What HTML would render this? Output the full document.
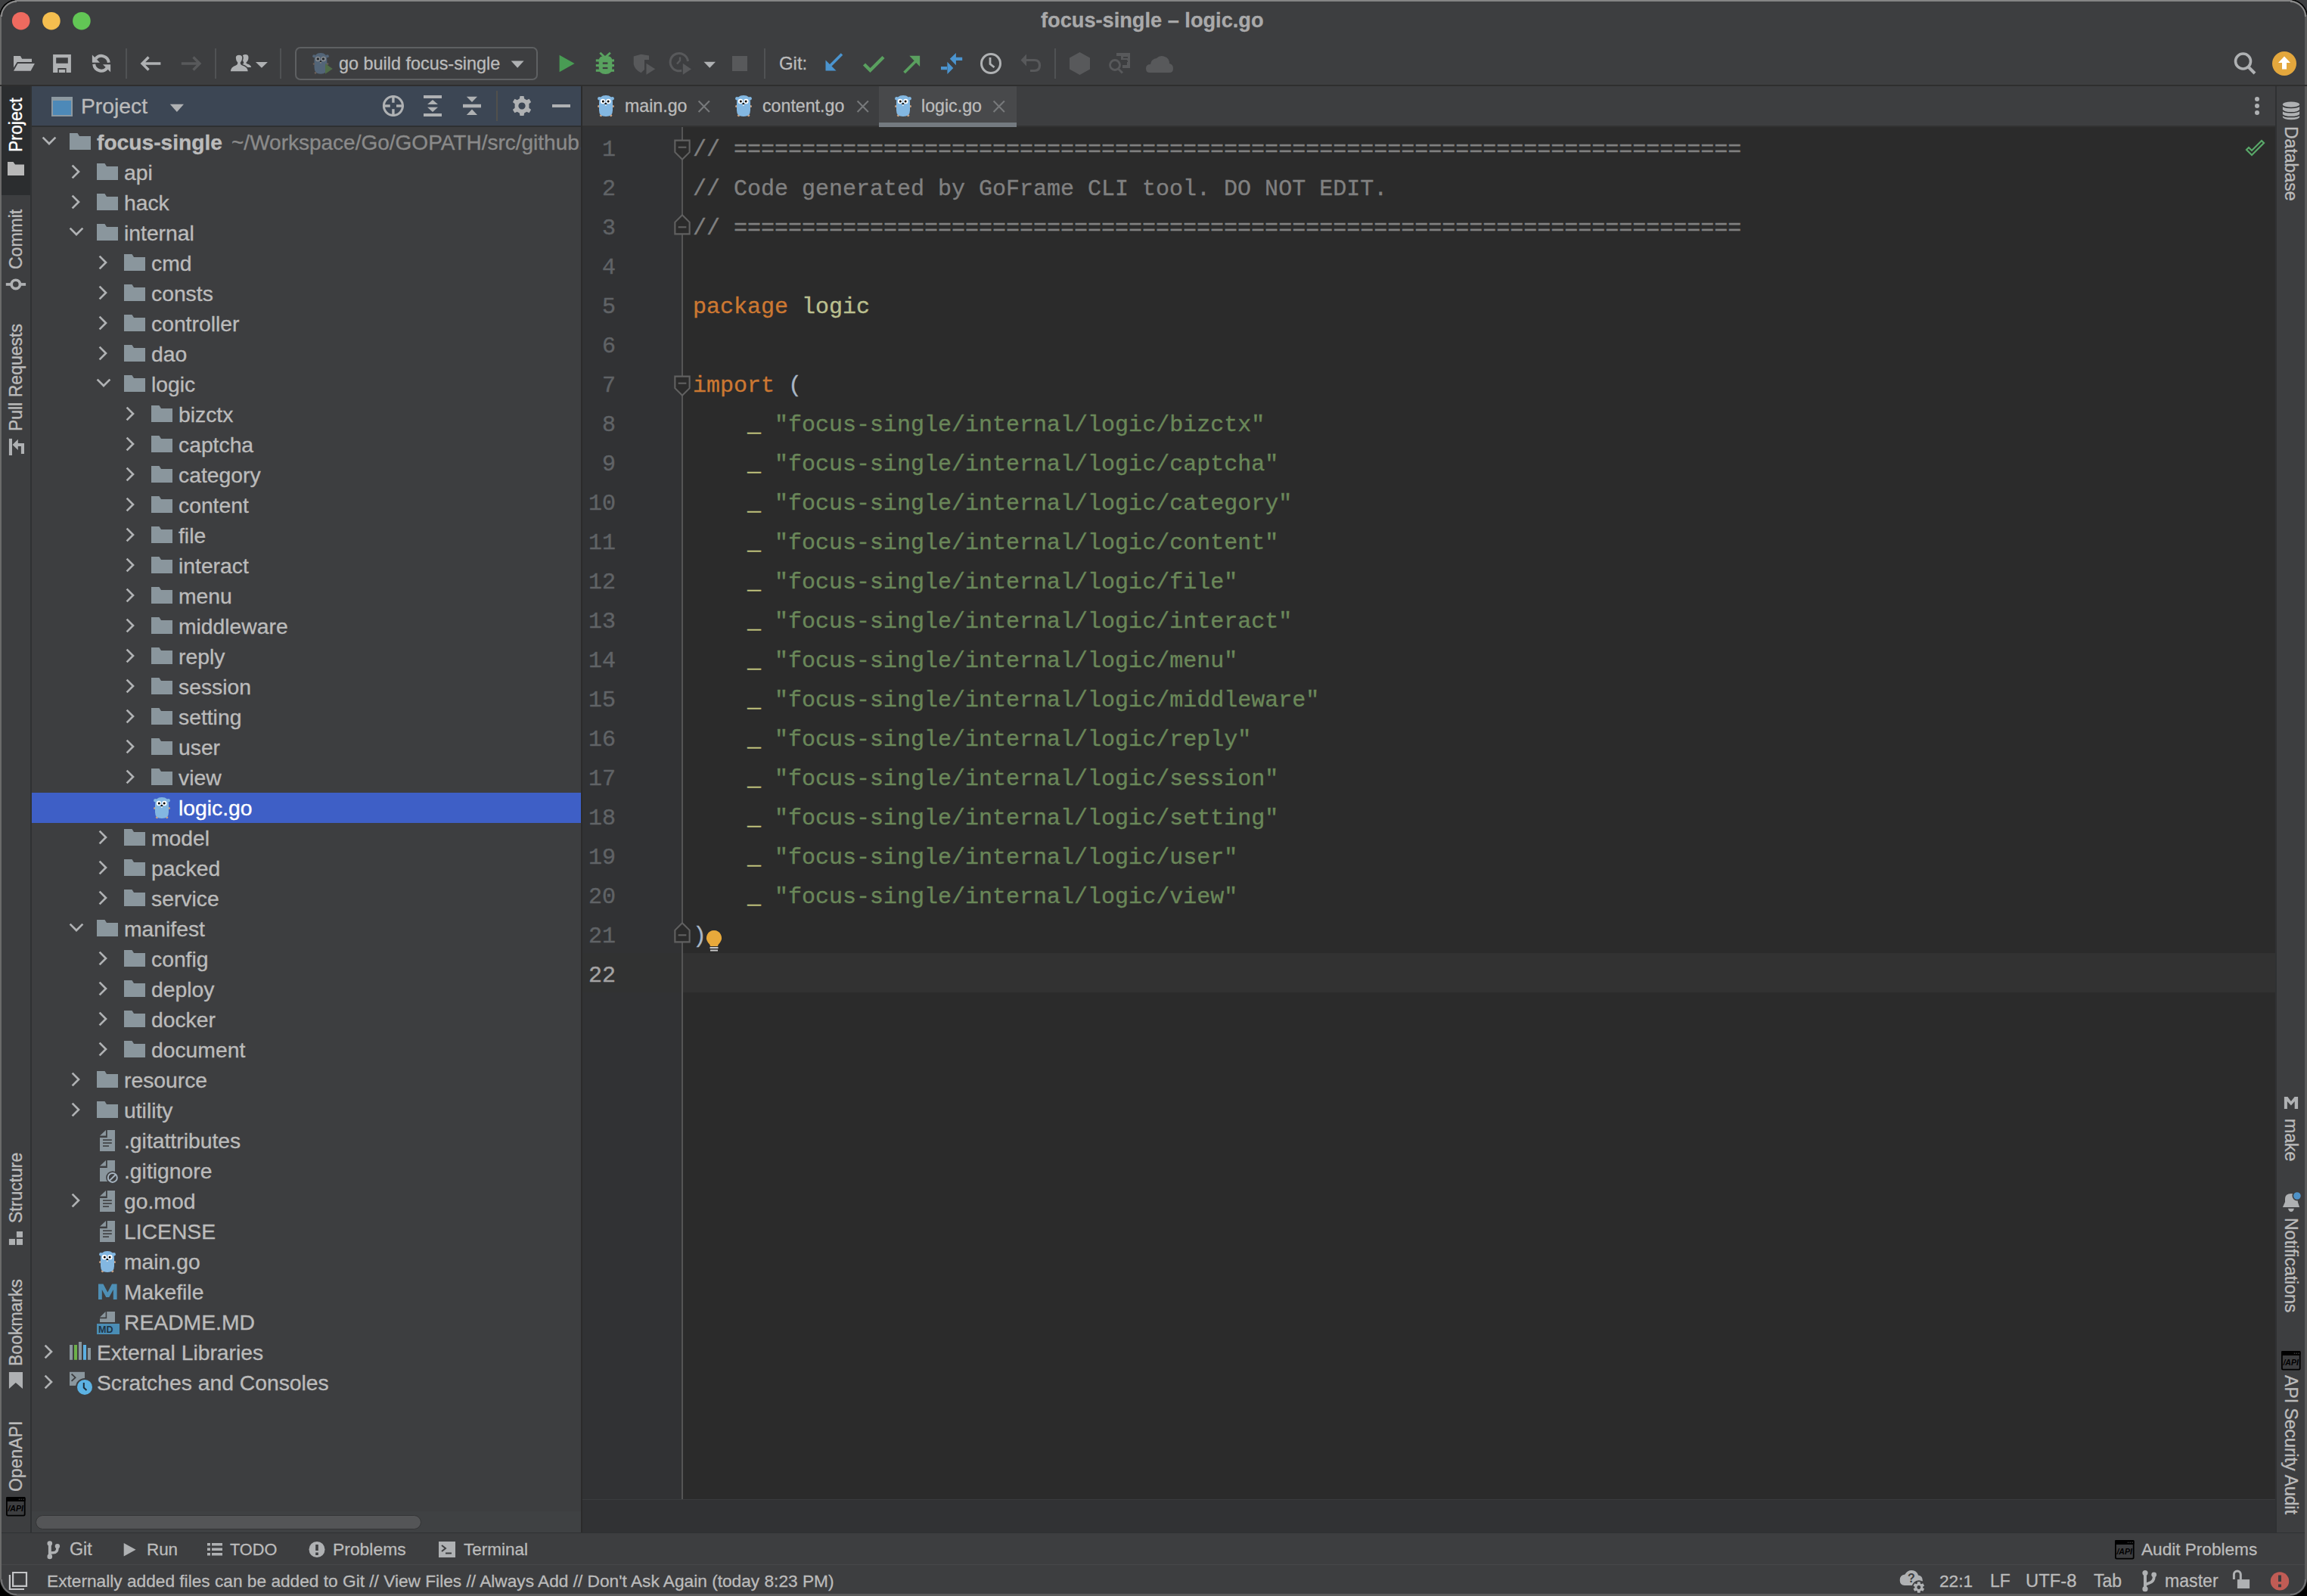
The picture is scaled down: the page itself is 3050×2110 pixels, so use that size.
<!DOCTYPE html><html><head><meta charset="utf-8"><style>
html,body{margin:0;padding:0;}
body{width:3050px;height:2110px;overflow:hidden;position:relative;background:#3d3e40;}
svg{overflow:visible}
</style></head><body>
<div style="position:absolute;left:0px;top:0px;width:3050px;height:2110px;background:#3d3e40;"></div>
<div style="position:absolute;left:0px;top:0px;width:3050px;height:2px;background:#858585;"></div>
<div style="position:absolute;left:0px;top:0px;width:2px;height:2110px;background:#6a6a6a;"></div>
<div style="position:absolute;left:3047px;top:0px;width:3px;height:2110px;background:#5a5a5a;"></div>
<div style="position:absolute;left:0px;top:2107px;width:3050px;height:3px;background:#5a5a5a;"></div>
<svg style="position:absolute;left:0;top:0" width="140" height="56"><circle cx="27.7" cy="27.7" r="11.8" fill="#ee6a5f"/><circle cx="67.9" cy="27.7" r="11.8" fill="#f5be4f"/><circle cx="107.9" cy="27.7" r="11.8" fill="#62c655"/></svg>
<div style="position:absolute;left:1376px;top:11.38px;font:bold 27.2px 'Liberation Sans', sans-serif;line-height:normal;color:#a9a9aa;white-space:pre;letter-spacing:0px;-webkit-text-stroke:0.3px #a9a9aa;">focus-single – logic.go</div>
<div style="position:absolute;left:0px;top:112px;width:3050px;height:2px;background:#2e2e2e;"></div>
<svg style="position:absolute;left:0px;top:56px" width="60" height="56" viewBox="0 56 60 56"><path d="M18 73.95 H27 L29.1 77.65 H42 V81.95 H22.7 L18 89.4 Z" fill="#afb1b3"/><path d="M23.5 84.1 H45.9 L40.6 93.85 H18 Z" fill="#afb1b3"/></svg>
<svg style="position:absolute;left:60px;top:56px" width="50" height="56" viewBox="60 56 50 56"><path d="M70.1 72 H93.9 V96 H87.6 V90.1 H76.3 V96 H70.1 Z M74.2 76.3 V83.7 H89.8 V76.3 Z" fill="#afb1b3" fill-rule="evenodd"/><rect x="77.9" y="91.9" width="8.2" height="4.1" fill="#afb1b3"/></svg>
<svg style="position:absolute;left:110px;top:56px" width="50" height="56" viewBox="110 56 50 56"><g fill="none" stroke="#afb1b3" stroke-width="4"><path d="M126.28 77.77 A9.8 9.8 0 0 1 143.8 82.8"/><path d="M124.2 84.8 A9.8 9.8 0 0 0 141.72 89.83"/></g><path d="M121.9 72.6 V82.7 H132 Z" fill="#afb1b3"/><path d="M136 85.2 H146.1 V95.2 Z" fill="#afb1b3"/></svg>
<div style="position:absolute;left:166px;top:64px;width:2px;height:40px;background:#505254;"></div>
<svg style="position:absolute;left:180px;top:56px" width="40" height="56" viewBox="180 56 40 56"><path d="M212.4 84 H188.5 M196.5 75.5 L188 84 L196.5 92.5" fill="none" stroke="#afb1b3" stroke-width="3.4"/></svg>
<svg style="position:absolute;left:235px;top:56px" width="40" height="56" viewBox="235 56 40 56"><path d="M239.8 84 H263.5 M255.5 75.5 L264 84 L255.5 92.5" fill="none" stroke="#58595b" stroke-width="3.4"/></svg>
<div style="position:absolute;left:284px;top:64px;width:2px;height:40px;background:#505254;"></div>
<svg style="position:absolute;left:300px;top:56px" width="60" height="56" viewBox="300 56 60 56"><path d="M319 89 Q319 85 322 84 Q322.5 83.5 322 82 Q320 79 320 76 Q320 72 324.5 72 Q328.5 72 328.5 76 Q328.5 80 325.5 82.5 Q325 83.8 327 84.5 Q332 86 332 89 Z" fill="#afb1b3"/><path d="M304 95 Q304 88 312 85.5 Q313.5 85 313.5 83 Q311 80 311 76.5 Q311 72 316 72 Q321 72 321 76.5 Q321 80 318.5 83 Q318.5 85 320 85.5 Q328.6 88 328.6 95 Z" fill="#afb1b3" stroke="#3d3e40" stroke-width="1.6"/><path d="M338 82 H353.9 L345.95 89.8 z" fill="#afb1b3"/></svg>
<div style="position:absolute;left:370px;top:64px;width:2px;height:40px;background:#505254;"></div>
<div style="position:absolute;left:390px;top:62px;width:317px;height:40px;border:2px solid #5e6062;border-radius:7px"></div>
<svg width="0" height="0" style="position:absolute"><defs>
<symbol id="gopher" viewBox="0 0 22 30">
<circle cx="2.4" cy="5.3" r="2.3" fill="#83b7e1"/><circle cx="19.6" cy="5.3" r="2.3" fill="#83b7e1"/>
<circle cx="1.5" cy="15.5" r="1.5" fill="#c8a081"/><circle cx="20.5" cy="15.5" r="1.5" fill="#c8a081"/>
<circle cx="4.5" cy="27.6" r="1.6" fill="#c8a081"/><circle cx="17.7" cy="27.6" r="1.6" fill="#c8a081"/>
<path d="M2 10 Q2 1 11 1 Q20 1 20 10 V21 Q20 29 11 29 Q2 29 2 21 Z" fill="#83b7e1"/>
<circle cx="7" cy="9" r="3.2" fill="#fff"/><circle cx="14.4" cy="9" r="3.2" fill="#fff"/>
<circle cx="7.3" cy="9" r="1.5" fill="#000"/><circle cx="14.1" cy="9" r="1.5" fill="#000"/>
<rect x="9.9" y="12.6" width="1.8" height="2" fill="#fff"/><ellipse cx="10.8" cy="12.2" rx="1.5" ry="1.1" fill="#111"/>
</symbol>
<symbol id="folder" viewBox="0 0 28 22">
<path d="M0 0 H10.5 L13 4 H28 V22 H0 Z" fill="#8a969d"/>
</symbol>
<symbol id="chevR" viewBox="0 0 12 20">
<path d="M1.6 1.6 L10 10 L1.6 18.4" fill="none" stroke="#b0b2b4" stroke-width="2.7"/>
</symbol>
<symbol id="chevD" viewBox="0 0 20 12">
<path d="M1.6 1.6 L10 10 L18.4 1.6" fill="none" stroke="#b0b2b4" stroke-width="2.7"/>
</symbol>
<symbol id="filei" viewBox="0 0 20 28">
<path d="M0 5.5 L5.5 0 V5.5 Z" fill="#8a969d"/><path d="M7 0 H20 V28 H0 V7 H7 Z" fill="#8a969d"/>
<rect x="3.5" y="13" width="13" height="2.2" fill="#3d3e40"/><rect x="3.5" y="17.5" width="10" height="2.2" fill="#3d3e40"/><rect x="3.5" y="22" width="7" height="2.2" fill="#3d3e40"/>
</symbol>
</defs></svg>
<svg style="position:absolute;left:405px;top:64px" width="45" height="40" viewBox="0 0 45 40"><g fill="#536578"><circle cx="10.2" cy="10.2" r="2"/><circle cx="27.8" cy="10.2" r="2"/><path d="M10.5 15 Q10.5 6 19 6 Q27.3 6 27.3 15 V25 Q27.3 33.7 19 33.7 Q10.5 33.7 10.5 25 Z"/></g><circle cx="10" cy="20.5" r="1.3" fill="#6a5e58"/><circle cx="28" cy="20.5" r="1.3" fill="#6a5e58"/><circle cx="12" cy="32.4" r="1.3" fill="#6a5e58"/><circle cx="15.2" cy="13.9" r="2.6" fill="none" stroke="#8b8c8d" stroke-width="1.3"/><circle cx="22.7" cy="13.9" r="2.6" fill="none" stroke="#8b8c8d" stroke-width="1.3"/><circle cx="15.4" cy="13.9" r="1.4" fill="#222"/><circle cx="22.3" cy="13.9" r="1.4" fill="#222"/><ellipse cx="19" cy="17.2" rx="1.2" ry="0.9" fill="#222"/><rect x="18.2" y="18" width="1.6" height="1.6" fill="#888"/><path d="M25 20 L34.8 27 L25 33.8 Z" fill="#4f6c48"/></svg>
<div style="position:absolute;left:448px;top:70.82px;font:normal 23.4px 'Liberation Sans', sans-serif;line-height:normal;color:#bbbbbb;white-space:pre;letter-spacing:0px;-webkit-text-stroke:0.3px #bbbbbb;">go build focus-single</div>
<svg style="position:absolute;left:670px;top:75px" width="30" height="20" viewBox="0 0 30 20"><path d="M5.7 5.4 H22.6 L14.15 14.8 Z" fill="#afb1b3"/></svg>
<svg style="position:absolute;left:735px;top:66px" width="30" height="36" viewBox="0 0 30 36"><path d="M4.6 6.8 L24.6 18 L4.6 29.2 Z" fill="#499c54"/></svg>
<svg style="position:absolute;left:782px;top:66px" width="36" height="36" viewBox="0 0 36 36"><g fill="#59a25f"><path d="M11.3 3.8 L17.9 10 L24.9 3.8" fill="none" stroke="#59a25f" stroke-width="2.8"/><path d="M9.7 14 Q9.7 7.7 18.5 7.7 Q27.3 7.7 27.3 14 V24 Q27.3 32 18.5 32 Q9.7 32 9.7 24 Z"/><rect x="5.8" y="12.4" width="24.2" height="3.1"/><rect x="5.8" y="19" width="24.2" height="3.1"/><rect x="5.8" y="25.6" width="24.2" height="3.2"/></g><rect x="14.8" y="16.4" width="6.6" height="2.4" fill="#3d3e40"/><rect x="14.8" y="22.9" width="6.6" height="2.2" fill="#3d3e40"/></svg>
<svg style="position:absolute;left:830px;top:66px" width="40" height="36" viewBox="0 0 40 36"><path d="M7.7 8.5 L17.5 5.7 L28 7.5 V13 H22 V26 L17.5 30.3 Q9 26 7.7 19 Z" fill="#58595b"/><path d="M23.7 16.3 L37.8 25.3 L23.7 34.2 Z" fill="#58595b" stroke="#3d3e40" stroke-width="1.6"/></svg>
<svg style="position:absolute;left:878px;top:66px" width="40" height="36" viewBox="0 0 40 36"><path d="M27.5 25 A11.7 11.7 0 1 1 31.5 15" fill="none" stroke="#58595b" stroke-width="3"/><path d="M21 9.5 V14 L17 18.5" fill="none" stroke="#58595b" stroke-width="2.4"/><path d="M24 16.3 L37.3 25.3 L24 34.2 Z" fill="#58595b" stroke="#3d3e40" stroke-width="1.6"/></svg>
<svg style="position:absolute;left:925px;top:75px" width="30" height="20" viewBox="0 0 30 20"><path d="M5.5 6.7 H21 L13.25 14.8 Z" fill="#afb1b3"/></svg>
<div style="position:absolute;left:968px;top:74px;width:20px;height:19.5px;background:#58595b;"></div>
<div style="position:absolute;left:1010px;top:64px;width:2px;height:40px;background:#505254;"></div>
<div style="position:absolute;left:1030px;top:70.37px;font:normal 23.9px 'Liberation Sans', sans-serif;line-height:normal;color:#bbbbbb;white-space:pre;letter-spacing:0px;-webkit-text-stroke:0.3px #bbbbbb;">Git:</div>
<svg style="position:absolute;left:1086px;top:66px" width="36" height="36" viewBox="0 0 36 36"><path d="M27 5.5 L9 23.5" stroke="#4b94cf" stroke-width="3.6" fill="none"/><path d="M5.5 13.5 V27.5 H19.5 Z" fill="#4b94cf"/></svg>
<svg style="position:absolute;left:1138px;top:66px" width="36" height="36" viewBox="0 0 36 36"><path d="M4.5 19 L12.5 27 L30 9.5" stroke="#5aa05f" stroke-width="4.4" fill="none"/></svg>
<svg style="position:absolute;left:1190px;top:66px" width="36" height="36" viewBox="0 0 36 36"><path d="M5.5 30 L22.5 13" stroke="#5aa05f" stroke-width="3.8" fill="none"/><path d="M12.3 7.8 H26.1 V21.9 Z" fill="#5aa05f"/></svg>
<svg style="position:absolute;left:1240px;top:62px" width="40" height="40" viewBox="0 0 40 40"><path d="M15.8 15.8 L23.9 7.9 V24.2 Z M23.5 13.75 H32.2 V18 H23.5 Z M12 25.9 H4 V30.2 H12 Z M20.3 28 L12.4 19.7 V36 Z" fill="#4b94cf"/></svg>
<svg style="position:absolute;left:1292px;top:66px" width="36" height="36" viewBox="0 0 36 36"><circle cx="18" cy="18" r="12.5" fill="none" stroke="#afb1b3" stroke-width="3"/><path d="M17 10 V18.5 L22.5 23" stroke="#afb1b3" stroke-width="2.8" fill="none"/></svg>
<svg style="position:absolute;left:1346px;top:66px" width="36" height="36" viewBox="0 0 36 36"><path d="M10.5 13.5 H21.5 Q28.5 13.5 28.5 20.5 Q28.5 27.5 21.5 27.5 H16" stroke="#58595b" stroke-width="3.2" fill="none"/><path d="M3.5 13.5 L11 5.5 V21.5 Z" fill="#58595b"/></svg>
<div style="position:absolute;left:1394px;top:64px;width:2px;height:40px;background:#505254;"></div>
<svg style="position:absolute;left:1410px;top:66px" width="36" height="36" viewBox="0 0 36 36"><path d="M17.5 3 L31 10.5 V25.5 L17.5 33 L4 25.5 V10.5 Z" fill="#58595b"/></svg>
<svg style="position:absolute;left:1462px;top:66px" width="36" height="36" viewBox="0 0 36 36"><path d="M14 4 H32 V24 H22 V20 H28 V13 H20 V8 H14 Z" fill="#58595b"/><rect x="23" y="9" width="6" height="2" fill="#3d3e40"/><rect x="23" y="14" width="6" height="2" fill="#3d3e40"/><circle cx="12" cy="20" r="6.5" fill="none" stroke="#58595b" stroke-width="2.8"/><path d="M16.5 25 L22 30.5" stroke="#58595b" stroke-width="3"/></svg>
<svg style="position:absolute;left:1514px;top:66px" width="40" height="36" viewBox="0 0 40 36"><path d="M6 30 Q1 30 1 24.5 Q1 19 7 19 Q8 12 15 11 Q20 6 26 9 Q32 11 32 18 Q37 19 37 24.5 Q37 30 32 30 Z" fill="#58595b"/></svg>
<svg style="position:absolute;left:2950px;top:66px" width="40" height="40" viewBox="0 0 40 40"><circle cx="15.5" cy="15" r="10" fill="none" stroke="#afb1b3" stroke-width="3.6"/><path d="M22.5 22.5 L31 31" stroke="#afb1b3" stroke-width="4"/></svg>
<svg style="position:absolute;left:3000px;top:64px" width="40" height="40" viewBox="0 0 40 40"><circle cx="20" cy="20" r="16" fill="#e3a73d"/><path d="M20 10.5 L28 19 H23 V27.5 H17 V19 H12 Z" fill="#fff"/></svg>
<div style="position:absolute;left:2px;top:114px;width:38px;height:1913px;background:#3d3e40;"></div>
<div style="position:absolute;left:40px;top:114px;width:2px;height:1913px;background:#2f3133;"></div>
<div style="position:absolute;left:2px;top:114px;width:38px;height:144px;background:#2b2d2f;"></div>
<div style="position:absolute;left:10.3px;top:201.3px;transform-origin:0 0;transform:rotate(-90deg);font:normal 23px 'Liberation Sans', sans-serif;line-height:1;color:#ffffff;white-space:pre;-webkit-text-stroke:0.4px #ffffff">Project</div>
<div style="position:absolute;left:10.3px;top:356.3px;transform-origin:0 0;transform:rotate(-90deg);font:normal 23px 'Liberation Sans', sans-serif;line-height:1;color:#bbbbbb;white-space:pre;-webkit-text-stroke:0.4px #bbbbbb">Commit</div>
<div style="position:absolute;left:10.3px;top:570.3px;transform-origin:0 0;transform:rotate(-90deg);font:normal 23px 'Liberation Sans', sans-serif;line-height:1;color:#bbbbbb;white-space:pre;-webkit-text-stroke:0.4px #bbbbbb">Pull Requests</div>
<div style="position:absolute;left:10.3px;top:1617.3px;transform-origin:0 0;transform:rotate(-90deg);font:normal 23px 'Liberation Sans', sans-serif;line-height:1;color:#bbbbbb;white-space:pre;-webkit-text-stroke:0.4px #bbbbbb">Structure</div>
<div style="position:absolute;left:10.3px;top:1805.7px;transform-origin:0 0;transform:rotate(-90deg);font:normal 23px 'Liberation Sans', sans-serif;line-height:1;color:#bbbbbb;white-space:pre;-webkit-text-stroke:0.4px #bbbbbb">Bookmarks</div>
<div style="position:absolute;left:10.3px;top:1971.8px;transform-origin:0 0;transform:rotate(-90deg);font:normal 23px 'Liberation Sans', sans-serif;line-height:1;color:#bbbbbb;white-space:pre;-webkit-text-stroke:0.4px #bbbbbb">OpenAPI</div>
<svg style="position:absolute;left:7px;top:210px" width="28" height="26" viewBox="0 0 28 26"><path d="M3 3.9 H10.5 L13 7.6 H25 V21.9 H3 Z" fill="#b8b8b8"/></svg>
<svg style="position:absolute;left:4px;top:362px" width="36" height="28" viewBox="4 362 36 28"><circle cx="20.8" cy="375.9" r="5.65" fill="none" stroke="#afb1b3" stroke-width="3.7"/><rect x="7.8" y="374.1" width="7" height="3.7" fill="#afb1b3"/><rect x="26.8" y="374.1" width="7.3" height="3.7" fill="#afb1b3"/></svg>
<svg style="position:absolute;left:6px;top:574px" width="32" height="32" viewBox="6 574 32 32"><rect x="11.9" y="579.9" width="4.1" height="22.1" fill="#afb1b3"/><path d="M16.5 587.9 L23.8 580.8 V585.9 H32 V599.9 H27.9 V590 H23.8 V594.9 Z" fill="#afb1b3"/></svg>
<svg style="position:absolute;left:6px;top:1624px" width="32" height="26" viewBox="6 1624 32 26"><rect x="21.9" y="1628" width="8.1" height="7.9" fill="#afb1b3"/><rect x="11.9" y="1637.9" width="8.1" height="8" fill="#afb1b3"/><rect x="21.9" y="1637.9" width="8.1" height="8" fill="#afb1b3"/></svg>
<svg style="position:absolute;left:6px;top:1810px" width="32" height="30" viewBox="6 1810 32 30"><path d="M11.9 1813.9 H30 V1836 L20.8 1828.1 L11.9 1836 Z" fill="#afb1b3"/></svg>
<svg style="position:absolute;left:6.199999999999999px;top:1976.6px" width="30" height="30" viewBox="6.199999999999999 1976.6 30 30"><rect x="9.1" y="1979.5" width="23.8" height="23.8" rx="1.6" fill="none" stroke="#000" stroke-width="1.8"/><rect x="8.2" y="1978.6" width="25.6" height="5.9" rx="1.4" fill="#000"/><circle cx="25.7" cy="1981.8" r="0.8" fill="#444"/><circle cx="28.4" cy="1981.8" r="0.8" fill="#444"/><circle cx="31.3" cy="1981.8" r="0.8" fill="#444"/><text x="20.799999999999997" y="1998.0" font-family="Liberation Sans" font-weight="bold" font-size="10.5" fill="#000" text-anchor="middle" font-style="italic">/API</text></svg>
<div style="position:absolute;left:42px;top:114px;width:726px;height:52px;background:#3c4654;"></div>
<div style="position:absolute;left:42px;top:166px;width:726px;height:2px;background:#2e3032;"></div>
<div style="position:absolute;left:768px;top:114px;width:2px;height:1913px;background:#2b2b2b;"></div>
<svg style="position:absolute;left:66px;top:126px" width="32" height="30" viewBox="0 0 32 30"><rect x="2" y="2" width="28" height="26" fill="#8d99a1"/><rect x="4" y="7" width="24" height="19" fill="#4d89b8"/></svg>
<div style="position:absolute;left:107px;top:123.79px;font:normal 28.3px 'Liberation Sans', sans-serif;line-height:normal;color:#bbbbbb;white-space:pre;letter-spacing:0px;-webkit-text-stroke:0.3px #bbbbbb;">Project</div>
<svg style="position:absolute;left:220px;top:132px" width="30" height="20" viewBox="0 0 30 20"><path d="M4.8 5.8 H23 L13.9 15.9 Z" fill="#afb1b3"/></svg>
<svg style="position:absolute;left:500px;top:120px" width="40" height="40" viewBox="0 0 40 40"><circle cx="19.9" cy="20" r="12.5" fill="none" stroke="#afb1b3" stroke-width="3"/><rect x="18.2" y="6" width="3.4" height="9.8" fill="#afb1b3"/><rect x="18.2" y="24.2" width="3.4" height="9.8" fill="#afb1b3"/><rect x="6" y="18.3" width="9.8" height="3.4" fill="#afb1b3"/><rect x="24" y="18.3" width="9.8" height="3.4" fill="#afb1b3"/></svg>
<svg style="position:absolute;left:555px;top:120px" width="34" height="40" viewBox="0 0 34 40"><rect x="5" y="6" width="24" height="4" fill="#afb1b3"/><rect x="5" y="30" width="24" height="4" fill="#afb1b3"/><path d="M10 18 L17 12 L24 18 Z M10 21.7 H24 L17 27.9 Z" fill="#afb1b3"/></svg>
<svg style="position:absolute;left:607px;top:120px" width="34" height="40" viewBox="0 0 34 40"><rect x="5" y="17.8" width="24" height="4.5" fill="#afb1b3"/><path d="M9.8 7.7 H24 L17 15 Z M9.8 32 L17 24.6 L24 32 Z" fill="#afb1b3"/></svg>
<div style="position:absolute;left:656px;top:120px;width:2px;height:40px;background:#51504c;"></div>
<svg style="position:absolute;left:670px;top:120px" width="40" height="40" viewBox="0 0 40 40"><g transform="translate(20 20)"><path d="M-2.5 -13 H2.5 L3.2 -9.6 L6.3 -7.8 L9.6 -9.3 L12.1 -5 L9.4 -2.7 V2.7 L12.1 5 L9.6 9.3 L6.3 7.8 L3.2 9.6 L2.5 13 H-2.5 L-3.2 9.6 L-6.3 7.8 L-9.6 9.3 L-12.1 5 L-9.4 2.7 V-2.7 L-12.1 -5 L-9.6 -9.3 L-6.3 -7.8 L-3.2 -9.6 Z M0 -4.6 A4.6 4.6 0 1 0 0.01 -4.6 Z" fill="#afb1b3" fill-rule="evenodd"/></g></svg>
<div style="position:absolute;left:730px;top:137.8px;width:24px;height:4.5px;background:#afb1b3;"></div>
<div style="position:absolute;left:42px;top:168px;width:726px;height:1858px;overflow:hidden">
<svg style="position:absolute;left:13px;top:12.300000000000011px" width="20" height="12"><use href="#chevD" width="20" height="12"/></svg>
<svg style="position:absolute;left:50px;top:8px" width="28" height="22"><use href="#folder" width="28" height="22"/></svg>
<div style="position:absolute;left:86px;top:4.48px;font:bold 28.2px 'Liberation Sans', sans-serif;color:#bbbbbb;white-space:pre;letter-spacing:0px;-webkit-text-stroke:0.35px #bbbbbb">focus-single</div>
<div style="position:absolute;left:264px;top:4.66px;font:normal 28.0px 'Liberation Sans', sans-serif;color:#8a8a8a;white-space:pre;letter-spacing:0px;-webkit-text-stroke:0.35px #8a8a8a">~/Workspace/Go/GOPATH/src/github.com/gogf/focus-single</div>
<svg style="position:absolute;left:52.3px;top:49.19999999999999px" width="12" height="20"><use href="#chevR" width="12" height="20"/></svg>
<svg style="position:absolute;left:86px;top:48px" width="28" height="22"><use href="#folder" width="28" height="22"/></svg>
<div style="position:absolute;left:122px;top:44.39px;font:normal 28.3px 'Liberation Sans', sans-serif;color:#bbbbbb;white-space:pre;letter-spacing:0px;-webkit-text-stroke:0.35px #bbbbbb">api</div>
<svg style="position:absolute;left:52.3px;top:89.19999999999999px" width="12" height="20"><use href="#chevR" width="12" height="20"/></svg>
<svg style="position:absolute;left:86px;top:88px" width="28" height="22"><use href="#folder" width="28" height="22"/></svg>
<div style="position:absolute;left:122px;top:84.39px;font:normal 28.3px 'Liberation Sans', sans-serif;color:#bbbbbb;white-space:pre;letter-spacing:0px;-webkit-text-stroke:0.35px #bbbbbb">hack</div>
<svg style="position:absolute;left:49px;top:132.3px" width="20" height="12"><use href="#chevD" width="20" height="12"/></svg>
<svg style="position:absolute;left:86px;top:128px" width="28" height="22"><use href="#folder" width="28" height="22"/></svg>
<div style="position:absolute;left:122px;top:124.39px;font:normal 28.3px 'Liberation Sans', sans-serif;color:#bbbbbb;white-space:pre;letter-spacing:0px;-webkit-text-stroke:0.35px #bbbbbb">internal</div>
<svg style="position:absolute;left:88.30000000000001px;top:169.2px" width="12" height="20"><use href="#chevR" width="12" height="20"/></svg>
<svg style="position:absolute;left:122px;top:168px" width="28" height="22"><use href="#folder" width="28" height="22"/></svg>
<div style="position:absolute;left:158px;top:164.39px;font:normal 28.3px 'Liberation Sans', sans-serif;color:#bbbbbb;white-space:pre;letter-spacing:0px;-webkit-text-stroke:0.35px #bbbbbb">cmd</div>
<svg style="position:absolute;left:88.30000000000001px;top:209.2px" width="12" height="20"><use href="#chevR" width="12" height="20"/></svg>
<svg style="position:absolute;left:122px;top:208px" width="28" height="22"><use href="#folder" width="28" height="22"/></svg>
<div style="position:absolute;left:158px;top:204.39px;font:normal 28.3px 'Liberation Sans', sans-serif;color:#bbbbbb;white-space:pre;letter-spacing:0px;-webkit-text-stroke:0.35px #bbbbbb">consts</div>
<svg style="position:absolute;left:88.30000000000001px;top:249.2px" width="12" height="20"><use href="#chevR" width="12" height="20"/></svg>
<svg style="position:absolute;left:122px;top:248px" width="28" height="22"><use href="#folder" width="28" height="22"/></svg>
<div style="position:absolute;left:158px;top:244.39px;font:normal 28.3px 'Liberation Sans', sans-serif;color:#bbbbbb;white-space:pre;letter-spacing:0px;-webkit-text-stroke:0.35px #bbbbbb">controller</div>
<svg style="position:absolute;left:88.30000000000001px;top:289.2px" width="12" height="20"><use href="#chevR" width="12" height="20"/></svg>
<svg style="position:absolute;left:122px;top:288px" width="28" height="22"><use href="#folder" width="28" height="22"/></svg>
<div style="position:absolute;left:158px;top:284.39px;font:normal 28.3px 'Liberation Sans', sans-serif;color:#bbbbbb;white-space:pre;letter-spacing:0px;-webkit-text-stroke:0.35px #bbbbbb">dao</div>
<svg style="position:absolute;left:85px;top:332.3px" width="20" height="12"><use href="#chevD" width="20" height="12"/></svg>
<svg style="position:absolute;left:122px;top:328px" width="28" height="22"><use href="#folder" width="28" height="22"/></svg>
<div style="position:absolute;left:158px;top:324.39px;font:normal 28.3px 'Liberation Sans', sans-serif;color:#bbbbbb;white-space:pre;letter-spacing:0px;-webkit-text-stroke:0.35px #bbbbbb">logic</div>
<svg style="position:absolute;left:124.30000000000001px;top:369.20000000000005px" width="12" height="20"><use href="#chevR" width="12" height="20"/></svg>
<svg style="position:absolute;left:158px;top:368px" width="28" height="22"><use href="#folder" width="28" height="22"/></svg>
<div style="position:absolute;left:194px;top:364.39px;font:normal 28.3px 'Liberation Sans', sans-serif;color:#bbbbbb;white-space:pre;letter-spacing:0px;-webkit-text-stroke:0.35px #bbbbbb">bizctx</div>
<svg style="position:absolute;left:124.30000000000001px;top:409.20000000000005px" width="12" height="20"><use href="#chevR" width="12" height="20"/></svg>
<svg style="position:absolute;left:158px;top:408px" width="28" height="22"><use href="#folder" width="28" height="22"/></svg>
<div style="position:absolute;left:194px;top:404.39px;font:normal 28.3px 'Liberation Sans', sans-serif;color:#bbbbbb;white-space:pre;letter-spacing:0px;-webkit-text-stroke:0.35px #bbbbbb">captcha</div>
<svg style="position:absolute;left:124.30000000000001px;top:449.20000000000005px" width="12" height="20"><use href="#chevR" width="12" height="20"/></svg>
<svg style="position:absolute;left:158px;top:448px" width="28" height="22"><use href="#folder" width="28" height="22"/></svg>
<div style="position:absolute;left:194px;top:444.39px;font:normal 28.3px 'Liberation Sans', sans-serif;color:#bbbbbb;white-space:pre;letter-spacing:0px;-webkit-text-stroke:0.35px #bbbbbb">category</div>
<svg style="position:absolute;left:124.30000000000001px;top:489.20000000000005px" width="12" height="20"><use href="#chevR" width="12" height="20"/></svg>
<svg style="position:absolute;left:158px;top:488px" width="28" height="22"><use href="#folder" width="28" height="22"/></svg>
<div style="position:absolute;left:194px;top:484.39px;font:normal 28.3px 'Liberation Sans', sans-serif;color:#bbbbbb;white-space:pre;letter-spacing:0px;-webkit-text-stroke:0.35px #bbbbbb">content</div>
<svg style="position:absolute;left:124.30000000000001px;top:529.2px" width="12" height="20"><use href="#chevR" width="12" height="20"/></svg>
<svg style="position:absolute;left:158px;top:528px" width="28" height="22"><use href="#folder" width="28" height="22"/></svg>
<div style="position:absolute;left:194px;top:524.39px;font:normal 28.3px 'Liberation Sans', sans-serif;color:#bbbbbb;white-space:pre;letter-spacing:0px;-webkit-text-stroke:0.35px #bbbbbb">file</div>
<svg style="position:absolute;left:124.30000000000001px;top:569.2px" width="12" height="20"><use href="#chevR" width="12" height="20"/></svg>
<svg style="position:absolute;left:158px;top:568px" width="28" height="22"><use href="#folder" width="28" height="22"/></svg>
<div style="position:absolute;left:194px;top:564.39px;font:normal 28.3px 'Liberation Sans', sans-serif;color:#bbbbbb;white-space:pre;letter-spacing:0px;-webkit-text-stroke:0.35px #bbbbbb">interact</div>
<svg style="position:absolute;left:124.30000000000001px;top:609.2px" width="12" height="20"><use href="#chevR" width="12" height="20"/></svg>
<svg style="position:absolute;left:158px;top:608px" width="28" height="22"><use href="#folder" width="28" height="22"/></svg>
<div style="position:absolute;left:194px;top:604.39px;font:normal 28.3px 'Liberation Sans', sans-serif;color:#bbbbbb;white-space:pre;letter-spacing:0px;-webkit-text-stroke:0.35px #bbbbbb">menu</div>
<svg style="position:absolute;left:124.30000000000001px;top:649.2px" width="12" height="20"><use href="#chevR" width="12" height="20"/></svg>
<svg style="position:absolute;left:158px;top:648px" width="28" height="22"><use href="#folder" width="28" height="22"/></svg>
<div style="position:absolute;left:194px;top:644.39px;font:normal 28.3px 'Liberation Sans', sans-serif;color:#bbbbbb;white-space:pre;letter-spacing:0px;-webkit-text-stroke:0.35px #bbbbbb">middleware</div>
<svg style="position:absolute;left:124.30000000000001px;top:689.2px" width="12" height="20"><use href="#chevR" width="12" height="20"/></svg>
<svg style="position:absolute;left:158px;top:688px" width="28" height="22"><use href="#folder" width="28" height="22"/></svg>
<div style="position:absolute;left:194px;top:684.39px;font:normal 28.3px 'Liberation Sans', sans-serif;color:#bbbbbb;white-space:pre;letter-spacing:0px;-webkit-text-stroke:0.35px #bbbbbb">reply</div>
<svg style="position:absolute;left:124.30000000000001px;top:729.2px" width="12" height="20"><use href="#chevR" width="12" height="20"/></svg>
<svg style="position:absolute;left:158px;top:728px" width="28" height="22"><use href="#folder" width="28" height="22"/></svg>
<div style="position:absolute;left:194px;top:724.39px;font:normal 28.3px 'Liberation Sans', sans-serif;color:#bbbbbb;white-space:pre;letter-spacing:0px;-webkit-text-stroke:0.35px #bbbbbb">session</div>
<svg style="position:absolute;left:124.30000000000001px;top:769.2px" width="12" height="20"><use href="#chevR" width="12" height="20"/></svg>
<svg style="position:absolute;left:158px;top:768px" width="28" height="22"><use href="#folder" width="28" height="22"/></svg>
<div style="position:absolute;left:194px;top:764.39px;font:normal 28.3px 'Liberation Sans', sans-serif;color:#bbbbbb;white-space:pre;letter-spacing:0px;-webkit-text-stroke:0.35px #bbbbbb">setting</div>
<svg style="position:absolute;left:124.30000000000001px;top:809.2px" width="12" height="20"><use href="#chevR" width="12" height="20"/></svg>
<svg style="position:absolute;left:158px;top:808px" width="28" height="22"><use href="#folder" width="28" height="22"/></svg>
<div style="position:absolute;left:194px;top:804.39px;font:normal 28.3px 'Liberation Sans', sans-serif;color:#bbbbbb;white-space:pre;letter-spacing:0px;-webkit-text-stroke:0.35px #bbbbbb">user</div>
<svg style="position:absolute;left:124.30000000000001px;top:849.2px" width="12" height="20"><use href="#chevR" width="12" height="20"/></svg>
<svg style="position:absolute;left:158px;top:848px" width="28" height="22"><use href="#folder" width="28" height="22"/></svg>
<div style="position:absolute;left:194px;top:844.39px;font:normal 28.3px 'Liberation Sans', sans-serif;color:#bbbbbb;white-space:pre;letter-spacing:0px;-webkit-text-stroke:0.35px #bbbbbb">view</div>
<div style="position:absolute;left:0px;top:880px;width:726px;height:40px;background:#3e5fc6"></div>
<svg style="position:absolute;left:161px;top:885px" width="22" height="30"><use href="#gopher" width="22" height="30"/></svg>
<div style="position:absolute;left:194px;top:884.39px;font:normal 28.3px 'Liberation Sans', sans-serif;color:#ffffff;white-space:pre;letter-spacing:0px;-webkit-text-stroke:0.35px #ffffff">logic.go</div>
<svg style="position:absolute;left:88.30000000000001px;top:929.2px" width="12" height="20"><use href="#chevR" width="12" height="20"/></svg>
<svg style="position:absolute;left:122px;top:928px" width="28" height="22"><use href="#folder" width="28" height="22"/></svg>
<div style="position:absolute;left:158px;top:924.39px;font:normal 28.3px 'Liberation Sans', sans-serif;color:#bbbbbb;white-space:pre;letter-spacing:0px;-webkit-text-stroke:0.35px #bbbbbb">model</div>
<svg style="position:absolute;left:88.30000000000001px;top:969.2px" width="12" height="20"><use href="#chevR" width="12" height="20"/></svg>
<svg style="position:absolute;left:122px;top:968px" width="28" height="22"><use href="#folder" width="28" height="22"/></svg>
<div style="position:absolute;left:158px;top:964.39px;font:normal 28.3px 'Liberation Sans', sans-serif;color:#bbbbbb;white-space:pre;letter-spacing:0px;-webkit-text-stroke:0.35px #bbbbbb">packed</div>
<svg style="position:absolute;left:88.30000000000001px;top:1009.2px" width="12" height="20"><use href="#chevR" width="12" height="20"/></svg>
<svg style="position:absolute;left:122px;top:1008px" width="28" height="22"><use href="#folder" width="28" height="22"/></svg>
<div style="position:absolute;left:158px;top:1004.39px;font:normal 28.3px 'Liberation Sans', sans-serif;color:#bbbbbb;white-space:pre;letter-spacing:0px;-webkit-text-stroke:0.35px #bbbbbb">service</div>
<svg style="position:absolute;left:49px;top:1052.3px" width="20" height="12"><use href="#chevD" width="20" height="12"/></svg>
<svg style="position:absolute;left:86px;top:1048px" width="28" height="22"><use href="#folder" width="28" height="22"/></svg>
<div style="position:absolute;left:122px;top:1044.39px;font:normal 28.3px 'Liberation Sans', sans-serif;color:#bbbbbb;white-space:pre;letter-spacing:0px;-webkit-text-stroke:0.35px #bbbbbb">manifest</div>
<svg style="position:absolute;left:88.30000000000001px;top:1089.2px" width="12" height="20"><use href="#chevR" width="12" height="20"/></svg>
<svg style="position:absolute;left:122px;top:1088px" width="28" height="22"><use href="#folder" width="28" height="22"/></svg>
<div style="position:absolute;left:158px;top:1084.39px;font:normal 28.3px 'Liberation Sans', sans-serif;color:#bbbbbb;white-space:pre;letter-spacing:0px;-webkit-text-stroke:0.35px #bbbbbb">config</div>
<svg style="position:absolute;left:88.30000000000001px;top:1129.2px" width="12" height="20"><use href="#chevR" width="12" height="20"/></svg>
<svg style="position:absolute;left:122px;top:1128px" width="28" height="22"><use href="#folder" width="28" height="22"/></svg>
<div style="position:absolute;left:158px;top:1124.39px;font:normal 28.3px 'Liberation Sans', sans-serif;color:#bbbbbb;white-space:pre;letter-spacing:0px;-webkit-text-stroke:0.35px #bbbbbb">deploy</div>
<svg style="position:absolute;left:88.30000000000001px;top:1169.2px" width="12" height="20"><use href="#chevR" width="12" height="20"/></svg>
<svg style="position:absolute;left:122px;top:1168px" width="28" height="22"><use href="#folder" width="28" height="22"/></svg>
<div style="position:absolute;left:158px;top:1164.39px;font:normal 28.3px 'Liberation Sans', sans-serif;color:#bbbbbb;white-space:pre;letter-spacing:0px;-webkit-text-stroke:0.35px #bbbbbb">docker</div>
<svg style="position:absolute;left:88.30000000000001px;top:1209.2px" width="12" height="20"><use href="#chevR" width="12" height="20"/></svg>
<svg style="position:absolute;left:122px;top:1208px" width="28" height="22"><use href="#folder" width="28" height="22"/></svg>
<div style="position:absolute;left:158px;top:1204.39px;font:normal 28.3px 'Liberation Sans', sans-serif;color:#bbbbbb;white-space:pre;letter-spacing:0px;-webkit-text-stroke:0.35px #bbbbbb">document</div>
<svg style="position:absolute;left:52.3px;top:1249.2px" width="12" height="20"><use href="#chevR" width="12" height="20"/></svg>
<svg style="position:absolute;left:86px;top:1248px" width="28" height="22"><use href="#folder" width="28" height="22"/></svg>
<div style="position:absolute;left:122px;top:1244.39px;font:normal 28.3px 'Liberation Sans', sans-serif;color:#bbbbbb;white-space:pre;letter-spacing:0px;-webkit-text-stroke:0.35px #bbbbbb">resource</div>
<svg style="position:absolute;left:52.3px;top:1289.2px" width="12" height="20"><use href="#chevR" width="12" height="20"/></svg>
<svg style="position:absolute;left:86px;top:1288px" width="28" height="22"><use href="#folder" width="28" height="22"/></svg>
<div style="position:absolute;left:122px;top:1284.39px;font:normal 28.3px 'Liberation Sans', sans-serif;color:#bbbbbb;white-space:pre;letter-spacing:0px;-webkit-text-stroke:0.35px #bbbbbb">utility</div>
<svg style="position:absolute;left:78px;top:1320px" width="40" height="40" viewBox="0 0 40 40"><path d="M12 13.5 L20 6 V13.5 Z" fill="#8a969d"/><path d="M12 16 H21.8 V6 H32 V34 H12 Z" fill="#8a969d"/><rect x="16" y="18.3" width="11.8" height="1.6" fill="#3d3e40"/><rect x="16" y="22.3" width="11.8" height="1.6" fill="#3d3e40"/><rect x="16" y="26.3" width="8" height="1.6" fill="#3d3e40"/></svg>
<div style="position:absolute;left:122px;top:1324.39px;font:normal 28.3px 'Liberation Sans', sans-serif;color:#bbbbbb;white-space:pre;letter-spacing:0px;-webkit-text-stroke:0.35px #bbbbbb">.gitattributes</div>
<svg style="position:absolute;left:78px;top:1360px" width="40" height="40" viewBox="0 0 40 40"><path d="M12 13.5 L20 6 V13.5 Z" fill="#8a969d"/><path d="M12 16 H21.8 V6 H32 V34 H12 Z" fill="#8a969d"/><circle cx="28.8" cy="28.9" r="8.6" fill="#3d3e40"/><circle cx="28.8" cy="28.9" r="6" fill="none" stroke="#a5b3bf" stroke-width="2"/><path d="M24.6 33.1 L33 24.7" stroke="#a5b3bf" stroke-width="2"/></svg>
<div style="position:absolute;left:122px;top:1364.39px;font:normal 28.3px 'Liberation Sans', sans-serif;color:#bbbbbb;white-space:pre;letter-spacing:0px;-webkit-text-stroke:0.35px #bbbbbb">.gitignore</div>
<svg style="position:absolute;left:52.3px;top:1409.2px" width="12" height="20"><use href="#chevR" width="12" height="20"/></svg>
<svg style="position:absolute;left:78px;top:1400px" width="40" height="40" viewBox="0 0 40 40"><path d="M12 13.5 L20 6 V13.5 Z" fill="#8a969d"/><path d="M12 16 H21.8 V6 H32 V34 H12 Z" fill="#8a969d"/><rect x="16" y="18.3" width="11.8" height="1.6" fill="#3d3e40"/><rect x="16" y="22.3" width="11.8" height="1.6" fill="#3d3e40"/><rect x="16" y="26.3" width="8" height="1.6" fill="#3d3e40"/></svg>
<div style="position:absolute;left:122px;top:1404.39px;font:normal 28.3px 'Liberation Sans', sans-serif;color:#bbbbbb;white-space:pre;letter-spacing:0px;-webkit-text-stroke:0.35px #bbbbbb">go.mod</div>
<svg style="position:absolute;left:78px;top:1440px" width="40" height="40" viewBox="0 0 40 40"><path d="M12 13.5 L20 6 V13.5 Z" fill="#8a969d"/><path d="M12 16 H21.8 V6 H32 V34 H12 Z" fill="#8a969d"/><rect x="16" y="18.3" width="11.8" height="1.6" fill="#3d3e40"/><rect x="16" y="22.3" width="11.8" height="1.6" fill="#3d3e40"/><rect x="16" y="26.3" width="8" height="1.6" fill="#3d3e40"/></svg>
<div style="position:absolute;left:122px;top:1444.39px;font:normal 28.3px 'Liberation Sans', sans-serif;color:#bbbbbb;white-space:pre;letter-spacing:0px;-webkit-text-stroke:0.35px #bbbbbb">LICENSE</div>
<svg style="position:absolute;left:89px;top:1485px" width="22" height="30"><use href="#gopher" width="22" height="30"/></svg>
<div style="position:absolute;left:122px;top:1484.39px;font:normal 28.3px 'Liberation Sans', sans-serif;color:#bbbbbb;white-space:pre;letter-spacing:0px;-webkit-text-stroke:0.35px #bbbbbb">main.go</div>
<svg style="position:absolute;left:87.6px;top:1526px" width="26" height="28" viewBox="0 0 26 28"><path d="M0 3.5 H6.5 L12.3 14.5 L18 3.5 H24.6 V24 H19.8 V11 L14.3 21 H10.3 L4.8 11 V24 H0 Z" fill="#4e8fb5"/></svg>
<div style="position:absolute;left:122px;top:1524.39px;font:normal 28.3px 'Liberation Sans', sans-serif;color:#bbbbbb;white-space:pre;letter-spacing:0px;-webkit-text-stroke:0.35px #bbbbbb">Makefile</div>
<svg style="position:absolute;left:86px;top:1560px" width="32" height="40" viewBox="0 0 32 40"><path d="M4 13.6 L11.6 6 V13.6 Z" fill="#8a969d"/><path d="M4 15.2 H13.2 V6 H24 V20 H4 Z" fill="#8a969d"/><rect x="0" y="22" width="30" height="14" fill="#4a8db5"/><text x="2" y="34" font-family="Liberation Sans" font-weight="bold" font-size="12.5" fill="#1f3445">MD</text></svg>
<div style="position:absolute;left:122px;top:1564.39px;font:normal 28.3px 'Liberation Sans', sans-serif;color:#bbbbbb;white-space:pre;letter-spacing:0px;-webkit-text-stroke:0.35px #bbbbbb">README.MD</div>
<svg style="position:absolute;left:16.299999999999997px;top:1609.2px" width="12" height="20"><use href="#chevR" width="12" height="20"/></svg>
<svg style="position:absolute;left:50px;top:1600px" width="30" height="40" viewBox="0 0 30 40"><rect x="0" y="10" width="4" height="19.8" fill="#8a969d"/><rect x="6" y="10" width="4" height="19.8" fill="#6cb14a"/><rect x="12" y="6" width="4" height="23.8" fill="#8a969d"/><rect x="18" y="10" width="4" height="19.8" fill="#5cb0e2"/><rect x="24" y="14" width="4" height="15.8" fill="#8a969d"/></svg>
<div style="position:absolute;left:86px;top:1604.39px;font:normal 28.3px 'Liberation Sans', sans-serif;color:#bbbbbb;white-space:pre;letter-spacing:0px;-webkit-text-stroke:0.35px #bbbbbb">External Libraries</div>
<svg style="position:absolute;left:16.299999999999997px;top:1649.2px" width="12" height="20"><use href="#chevR" width="12" height="20"/></svg>
<svg style="position:absolute;left:50px;top:1640px" width="36" height="40" viewBox="0 0 36 40"><rect x="0" y="5.8" width="20" height="18.1" fill="#8a969d"/><path d="M2.6 8.5 L7.6 13.2 L2.6 17.9" fill="none" stroke="#3d3e40" stroke-width="1.8"/><circle cx="20" cy="25.9" r="12" fill="#3d3e40"/><circle cx="20" cy="25.9" r="10" fill="#5cb2e3"/><path d="M18.8 20 V26.5 L22.5 30" fill="none" stroke="#1f2e3a" stroke-width="2"/></svg>
<div style="position:absolute;left:86px;top:1644.39px;font:normal 28.3px 'Liberation Sans', sans-serif;color:#bbbbbb;white-space:pre;letter-spacing:0px;-webkit-text-stroke:0.35px #bbbbbb">Scratches and Consoles</div>
<div style="position:absolute;left:0px;top:1830px;width:726px;height:28px;background:#3f4143"></div>
<div style="position:absolute;left:5px;top:1835px;width:508px;height:17px;background:#545557;border:1px solid #343536;border-radius:10px"></div>
</div>
<div style="position:absolute;left:770px;top:114px;width:2238px;height:52px;background:#3d3e40;"></div>
<div style="position:absolute;left:1162px;top:114px;width:182px;height:53px;background:#48494b;"></div>
<svg style="position:absolute;left:790px;top:125px" width="22" height="30"><use href="#gopher" width="22" height="30"/></svg>
<div style="position:absolute;left:826px;top:126.70px;font:normal 23.2px 'Liberation Sans', sans-serif;line-height:normal;color:#bbbbbb;white-space:pre;letter-spacing:0px;-webkit-text-stroke:0.3px #bbbbbb;">main.go</div>
<svg style="position:absolute;left:922px;top:132px" width="18" height="18" viewBox="0 0 17 17"><path d="M1.5 1.5 L15 15 M15 1.5 L1.5 15" stroke="#77797b" stroke-width="2"/></svg>
<svg style="position:absolute;left:972.4px;top:125px" width="22" height="30"><use href="#gopher" width="22" height="30"/></svg>
<div style="position:absolute;left:1008px;top:126.70px;font:normal 23.2px 'Liberation Sans', sans-serif;line-height:normal;color:#bbbbbb;white-space:pre;letter-spacing:0px;-webkit-text-stroke:0.3px #bbbbbb;">content.go</div>
<svg style="position:absolute;left:1132px;top:132px" width="18" height="18" viewBox="0 0 17 17"><path d="M1.5 1.5 L15 15 M15 1.5 L1.5 15" stroke="#77797b" stroke-width="2"/></svg>
<svg style="position:absolute;left:1182.5px;top:125px" width="22" height="30"><use href="#gopher" width="22" height="30"/></svg>
<div style="position:absolute;left:1218px;top:126.70px;font:normal 23.2px 'Liberation Sans', sans-serif;line-height:normal;color:#bbbbbb;white-space:pre;letter-spacing:0px;-webkit-text-stroke:0.3px #bbbbbb;">logic.go</div>
<svg style="position:absolute;left:1312px;top:132px" width="18" height="18" viewBox="0 0 17 17"><path d="M1.5 1.5 L15 15 M15 1.5 L1.5 15" stroke="#77797b" stroke-width="2"/></svg>
<svg style="position:absolute;left:2978px;top:124px" width="12" height="32" viewBox="0 0 12 32"><circle cx="6" cy="7" r="3" fill="#afb1b3"/><circle cx="6" cy="16" r="3" fill="#afb1b3"/><circle cx="6" cy="25" r="3" fill="#afb1b3"/></svg>
<div style="position:absolute;left:770px;top:166px;width:2238px;height:2px;background:#323232;"></div>
<div style="position:absolute;left:1162px;top:162px;width:182px;height:6px;background:#747a80;"></div>
<div style="position:absolute;left:770px;top:168px;width:132px;height:1814px;background:#313234;"></div>
<div style="position:absolute;left:902px;top:168px;width:2106px;height:1814px;background:#2b2b2b;"></div>
<div style="position:absolute;left:770px;top:1982px;width:2238px;height:1px;background:#3a3c3e;"></div>
<div style="position:absolute;left:770px;top:1983px;width:2238px;height:44px;background:#313234;"></div>
<div style="position:absolute;left:903px;top:1260px;width:2105px;height:52px;background:#323232;"></div>
<div style="position:absolute;left:770px;top:1260px;width:132px;height:52px;background:#313232;"></div>
<div style="position:absolute;left:901px;top:168px;width:2px;height:1814px;background:#555555;"></div>
<div style="position:absolute;left:796px;top:181.01px;font:normal 30px 'Liberation Mono', monospace;color:#606366;white-space:pre;-webkit-text-stroke:0.4px #606366">1</div>
<div style="position:absolute;left:916px;top:181.01px;font:normal 30px 'Liberation Mono', monospace;white-space:pre"><span style="color:#808080;-webkit-text-stroke:0.35px #808080">// ==========================================================================</span></div>
<div style="position:absolute;left:796px;top:233.01px;font:normal 30px 'Liberation Mono', monospace;color:#606366;white-space:pre;-webkit-text-stroke:0.4px #606366">2</div>
<div style="position:absolute;left:916px;top:233.01px;font:normal 30px 'Liberation Mono', monospace;white-space:pre"><span style="color:#808080;-webkit-text-stroke:0.35px #808080">// Code generated by GoFrame CLI tool. DO NOT EDIT.</span></div>
<div style="position:absolute;left:796px;top:285.01px;font:normal 30px 'Liberation Mono', monospace;color:#606366;white-space:pre;-webkit-text-stroke:0.4px #606366">3</div>
<div style="position:absolute;left:916px;top:285.01px;font:normal 30px 'Liberation Mono', monospace;white-space:pre"><span style="color:#808080;-webkit-text-stroke:0.35px #808080">// ==========================================================================</span></div>
<div style="position:absolute;left:796px;top:337.01px;font:normal 30px 'Liberation Mono', monospace;color:#606366;white-space:pre;-webkit-text-stroke:0.4px #606366">4</div>
<div style="position:absolute;left:796px;top:389.01px;font:normal 30px 'Liberation Mono', monospace;color:#606366;white-space:pre;-webkit-text-stroke:0.4px #606366">5</div>
<div style="position:absolute;left:916px;top:389.01px;font:normal 30px 'Liberation Mono', monospace;white-space:pre"><span style="color:#cc7832;-webkit-text-stroke:0.35px #cc7832">package</span><span style="color:#a9b7c6;-webkit-text-stroke:0.35px #a9b7c6"> </span><span style="color:#bbc08f;-webkit-text-stroke:0.35px #bbc08f">logic</span></div>
<div style="position:absolute;left:796px;top:441.01px;font:normal 30px 'Liberation Mono', monospace;color:#606366;white-space:pre;-webkit-text-stroke:0.4px #606366">6</div>
<div style="position:absolute;left:796px;top:493.01px;font:normal 30px 'Liberation Mono', monospace;color:#606366;white-space:pre;-webkit-text-stroke:0.4px #606366">7</div>
<div style="position:absolute;left:916px;top:493.01px;font:normal 30px 'Liberation Mono', monospace;white-space:pre"><span style="color:#cc7832;-webkit-text-stroke:0.35px #cc7832">import</span><span style="color:#a9b7c6;-webkit-text-stroke:0.35px #a9b7c6"> (</span></div>
<div style="position:absolute;left:796px;top:545.01px;font:normal 30px 'Liberation Mono', monospace;color:#606366;white-space:pre;-webkit-text-stroke:0.4px #606366">8</div>
<div style="position:absolute;left:916px;top:545.01px;font:normal 30px 'Liberation Mono', monospace;white-space:pre"><span style="color:#a9b7c6;-webkit-text-stroke:0.35px #a9b7c6">    </span><span style="color:#c5c77f;-webkit-text-stroke:0.35px #c5c77f">_</span><span style="color:#a9b7c6;-webkit-text-stroke:0.35px #a9b7c6"> </span><span style="color:#6a8759;-webkit-text-stroke:0.35px #6a8759">"focus-single/internal/logic/bizctx"</span></div>
<div style="position:absolute;left:796px;top:597.01px;font:normal 30px 'Liberation Mono', monospace;color:#606366;white-space:pre;-webkit-text-stroke:0.4px #606366">9</div>
<div style="position:absolute;left:916px;top:597.01px;font:normal 30px 'Liberation Mono', monospace;white-space:pre"><span style="color:#a9b7c6;-webkit-text-stroke:0.35px #a9b7c6">    </span><span style="color:#c5c77f;-webkit-text-stroke:0.35px #c5c77f">_</span><span style="color:#a9b7c6;-webkit-text-stroke:0.35px #a9b7c6"> </span><span style="color:#6a8759;-webkit-text-stroke:0.35px #6a8759">"focus-single/internal/logic/captcha"</span></div>
<div style="position:absolute;left:778px;top:649.01px;font:normal 30px 'Liberation Mono', monospace;color:#606366;white-space:pre;-webkit-text-stroke:0.4px #606366">10</div>
<div style="position:absolute;left:916px;top:649.01px;font:normal 30px 'Liberation Mono', monospace;white-space:pre"><span style="color:#a9b7c6;-webkit-text-stroke:0.35px #a9b7c6">    </span><span style="color:#c5c77f;-webkit-text-stroke:0.35px #c5c77f">_</span><span style="color:#a9b7c6;-webkit-text-stroke:0.35px #a9b7c6"> </span><span style="color:#6a8759;-webkit-text-stroke:0.35px #6a8759">"focus-single/internal/logic/category"</span></div>
<div style="position:absolute;left:778px;top:701.01px;font:normal 30px 'Liberation Mono', monospace;color:#606366;white-space:pre;-webkit-text-stroke:0.4px #606366">11</div>
<div style="position:absolute;left:916px;top:701.01px;font:normal 30px 'Liberation Mono', monospace;white-space:pre"><span style="color:#a9b7c6;-webkit-text-stroke:0.35px #a9b7c6">    </span><span style="color:#c5c77f;-webkit-text-stroke:0.35px #c5c77f">_</span><span style="color:#a9b7c6;-webkit-text-stroke:0.35px #a9b7c6"> </span><span style="color:#6a8759;-webkit-text-stroke:0.35px #6a8759">"focus-single/internal/logic/content"</span></div>
<div style="position:absolute;left:778px;top:753.01px;font:normal 30px 'Liberation Mono', monospace;color:#606366;white-space:pre;-webkit-text-stroke:0.4px #606366">12</div>
<div style="position:absolute;left:916px;top:753.01px;font:normal 30px 'Liberation Mono', monospace;white-space:pre"><span style="color:#a9b7c6;-webkit-text-stroke:0.35px #a9b7c6">    </span><span style="color:#c5c77f;-webkit-text-stroke:0.35px #c5c77f">_</span><span style="color:#a9b7c6;-webkit-text-stroke:0.35px #a9b7c6"> </span><span style="color:#6a8759;-webkit-text-stroke:0.35px #6a8759">"focus-single/internal/logic/file"</span></div>
<div style="position:absolute;left:778px;top:805.01px;font:normal 30px 'Liberation Mono', monospace;color:#606366;white-space:pre;-webkit-text-stroke:0.4px #606366">13</div>
<div style="position:absolute;left:916px;top:805.01px;font:normal 30px 'Liberation Mono', monospace;white-space:pre"><span style="color:#a9b7c6;-webkit-text-stroke:0.35px #a9b7c6">    </span><span style="color:#c5c77f;-webkit-text-stroke:0.35px #c5c77f">_</span><span style="color:#a9b7c6;-webkit-text-stroke:0.35px #a9b7c6"> </span><span style="color:#6a8759;-webkit-text-stroke:0.35px #6a8759">"focus-single/internal/logic/interact"</span></div>
<div style="position:absolute;left:778px;top:857.01px;font:normal 30px 'Liberation Mono', monospace;color:#606366;white-space:pre;-webkit-text-stroke:0.4px #606366">14</div>
<div style="position:absolute;left:916px;top:857.01px;font:normal 30px 'Liberation Mono', monospace;white-space:pre"><span style="color:#a9b7c6;-webkit-text-stroke:0.35px #a9b7c6">    </span><span style="color:#c5c77f;-webkit-text-stroke:0.35px #c5c77f">_</span><span style="color:#a9b7c6;-webkit-text-stroke:0.35px #a9b7c6"> </span><span style="color:#6a8759;-webkit-text-stroke:0.35px #6a8759">"focus-single/internal/logic/menu"</span></div>
<div style="position:absolute;left:778px;top:909.01px;font:normal 30px 'Liberation Mono', monospace;color:#606366;white-space:pre;-webkit-text-stroke:0.4px #606366">15</div>
<div style="position:absolute;left:916px;top:909.01px;font:normal 30px 'Liberation Mono', monospace;white-space:pre"><span style="color:#a9b7c6;-webkit-text-stroke:0.35px #a9b7c6">    </span><span style="color:#c5c77f;-webkit-text-stroke:0.35px #c5c77f">_</span><span style="color:#a9b7c6;-webkit-text-stroke:0.35px #a9b7c6"> </span><span style="color:#6a8759;-webkit-text-stroke:0.35px #6a8759">"focus-single/internal/logic/middleware"</span></div>
<div style="position:absolute;left:778px;top:961.01px;font:normal 30px 'Liberation Mono', monospace;color:#606366;white-space:pre;-webkit-text-stroke:0.4px #606366">16</div>
<div style="position:absolute;left:916px;top:961.01px;font:normal 30px 'Liberation Mono', monospace;white-space:pre"><span style="color:#a9b7c6;-webkit-text-stroke:0.35px #a9b7c6">    </span><span style="color:#c5c77f;-webkit-text-stroke:0.35px #c5c77f">_</span><span style="color:#a9b7c6;-webkit-text-stroke:0.35px #a9b7c6"> </span><span style="color:#6a8759;-webkit-text-stroke:0.35px #6a8759">"focus-single/internal/logic/reply"</span></div>
<div style="position:absolute;left:778px;top:1013.01px;font:normal 30px 'Liberation Mono', monospace;color:#606366;white-space:pre;-webkit-text-stroke:0.4px #606366">17</div>
<div style="position:absolute;left:916px;top:1013.01px;font:normal 30px 'Liberation Mono', monospace;white-space:pre"><span style="color:#a9b7c6;-webkit-text-stroke:0.35px #a9b7c6">    </span><span style="color:#c5c77f;-webkit-text-stroke:0.35px #c5c77f">_</span><span style="color:#a9b7c6;-webkit-text-stroke:0.35px #a9b7c6"> </span><span style="color:#6a8759;-webkit-text-stroke:0.35px #6a8759">"focus-single/internal/logic/session"</span></div>
<div style="position:absolute;left:778px;top:1065.01px;font:normal 30px 'Liberation Mono', monospace;color:#606366;white-space:pre;-webkit-text-stroke:0.4px #606366">18</div>
<div style="position:absolute;left:916px;top:1065.01px;font:normal 30px 'Liberation Mono', monospace;white-space:pre"><span style="color:#a9b7c6;-webkit-text-stroke:0.35px #a9b7c6">    </span><span style="color:#c5c77f;-webkit-text-stroke:0.35px #c5c77f">_</span><span style="color:#a9b7c6;-webkit-text-stroke:0.35px #a9b7c6"> </span><span style="color:#6a8759;-webkit-text-stroke:0.35px #6a8759">"focus-single/internal/logic/setting"</span></div>
<div style="position:absolute;left:778px;top:1117.01px;font:normal 30px 'Liberation Mono', monospace;color:#606366;white-space:pre;-webkit-text-stroke:0.4px #606366">19</div>
<div style="position:absolute;left:916px;top:1117.01px;font:normal 30px 'Liberation Mono', monospace;white-space:pre"><span style="color:#a9b7c6;-webkit-text-stroke:0.35px #a9b7c6">    </span><span style="color:#c5c77f;-webkit-text-stroke:0.35px #c5c77f">_</span><span style="color:#a9b7c6;-webkit-text-stroke:0.35px #a9b7c6"> </span><span style="color:#6a8759;-webkit-text-stroke:0.35px #6a8759">"focus-single/internal/logic/user"</span></div>
<div style="position:absolute;left:778px;top:1169.01px;font:normal 30px 'Liberation Mono', monospace;color:#606366;white-space:pre;-webkit-text-stroke:0.4px #606366">20</div>
<div style="position:absolute;left:916px;top:1169.01px;font:normal 30px 'Liberation Mono', monospace;white-space:pre"><span style="color:#a9b7c6;-webkit-text-stroke:0.35px #a9b7c6">    </span><span style="color:#c5c77f;-webkit-text-stroke:0.35px #c5c77f">_</span><span style="color:#a9b7c6;-webkit-text-stroke:0.35px #a9b7c6"> </span><span style="color:#6a8759;-webkit-text-stroke:0.35px #6a8759">"focus-single/internal/logic/view"</span></div>
<div style="position:absolute;left:778px;top:1221.01px;font:normal 30px 'Liberation Mono', monospace;color:#606366;white-space:pre;-webkit-text-stroke:0.4px #606366">21</div>
<div style="position:absolute;left:916px;top:1221.01px;font:normal 30px 'Liberation Mono', monospace;white-space:pre"><span style="color:#a9b7c6;-webkit-text-stroke:0.35px #a9b7c6">)</span></div>
<div style="position:absolute;left:778px;top:1273.01px;font:normal 30px 'Liberation Mono', monospace;color:#a4a3a3;white-space:pre;-webkit-text-stroke:0.4px #a4a3a3">22</div>
<svg style="position:absolute;left:890px;top:184px" width="24" height="30" viewBox="0 0 22 28"><path d="M2 1.5 H20 V16 L11 25 L2 16 Z" fill="#2b2b2b" stroke="#606060" stroke-width="2"/><rect x="6" y="9" width="10" height="2" fill="#606060"/></svg>
<svg style="position:absolute;left:890px;top:280.8px" width="24" height="30" viewBox="0 0 22 28"><path d="M2 26.5 H20 V12 L11 3 L2 12 Z" fill="#2b2b2b" stroke="#606060" stroke-width="2"/><rect x="6" y="17" width="10" height="2" fill="#606060"/></svg>
<svg style="position:absolute;left:890px;top:496px" width="24" height="30" viewBox="0 0 22 28"><path d="M2 1.5 H20 V16 L11 25 L2 16 Z" fill="#2b2b2b" stroke="#606060" stroke-width="2"/><rect x="6" y="9" width="10" height="2" fill="#606060"/></svg>
<svg style="position:absolute;left:890px;top:1217.4px" width="24" height="30" viewBox="0 0 22 28"><path d="M2 26.5 H20 V12 L11 3 L2 12 Z" fill="#2b2b2b" stroke="#606060" stroke-width="2"/><rect x="6" y="17" width="10" height="2" fill="#606060"/></svg>
<svg style="position:absolute;left:932px;top:1228px" width="24" height="32" viewBox="0 0 24 32"><path d="M12 2 A10 10 0 0 1 20 18 Q17 21 17 23 H7 Q7 21 4 18 A10 10 0 0 1 12 2 Z" fill="#e8a93b"/><rect x="6.5" y="24" width="11" height="2" fill="#c8c8c8"/><rect x="7" y="27.5" width="10" height="2" fill="#c8c8c8"/></svg>
<svg style="position:absolute;left:2966px;top:182px" width="32" height="28" viewBox="0 0 32 28"><path d="M4 16 L11 23 L27 7 L24 4 L11 17 L7 13 Z" fill="none" stroke="#59a869" stroke-width="2.2"/></svg>
<div style="position:absolute;left:3008px;top:114px;width:2px;height:1913px;background:#2f3133;"></div>
<div style="position:absolute;left:3010px;top:114px;width:37px;height:1913px;background:#3d3e40;"></div>
<div style="position:absolute;left:3040px;top:166.5px;transform-origin:0 0;transform:rotate(90deg);font:normal 23px 'Liberation Sans', sans-serif;line-height:1;color:#bbbbbb;white-space:pre;-webkit-text-stroke:0.35px #bbbbbb">Database</div>
<div style="position:absolute;left:3040px;top:1478.5px;transform-origin:0 0;transform:rotate(90deg);font:normal 23px 'Liberation Sans', sans-serif;line-height:1;color:#bbbbbb;white-space:pre;-webkit-text-stroke:0.35px #bbbbbb">make</div>
<div style="position:absolute;left:3040px;top:1609.5px;transform-origin:0 0;transform:rotate(90deg);font:normal 23px 'Liberation Sans', sans-serif;line-height:1;color:#bbbbbb;white-space:pre;-webkit-text-stroke:0.35px #bbbbbb">Notifications</div>
<div style="position:absolute;left:3040px;top:1818.2px;transform-origin:0 0;transform:rotate(90deg);font:normal 23px 'Liberation Sans', sans-serif;line-height:1;color:#bbbbbb;white-space:pre;-webkit-text-stroke:0.35px #bbbbbb">API Security Audit</div>
<svg style="position:absolute;left:3014px;top:130px" width="30" height="32" viewBox="3014 130 30 32"><path d="M3017.9 137.9 H3040.1 V154.8 A11.1 3.5 0 0 1 3017.9 154.8 Z" fill="#afb1b3"/><ellipse cx="3029" cy="137.9" rx="11.1" ry="3.4" fill="#afb1b3"/><g fill="none" stroke="#2f3032" stroke-width="1.5"><path d="M3017.9 139.3 A11.1 3.2 0 0 0 3040.1 139.3"/><path d="M3017.9 145.6 A11.1 3.2 0 0 0 3040.1 145.6"/><path d="M3017.9 151.4 A11.1 3.2 0 0 0 3040.1 151.4"/></g></svg>
<svg style="position:absolute;left:3010px;top:1440px" width="40" height="40" viewBox="0 0 40 40"><path d="M9.9 10 H14.4 L18.9 16 L23.6 10 H28.1 V25.9 H23.7 V16 L18.9 21.6 L13.9 16 V25.9 H9.9 Z" fill="#afb1b3"/></svg>
<svg style="position:absolute;left:3010px;top:1570px" width="40" height="40" viewBox="0 0 40 40"><path d="M7.9 25.9 L11 19 V15 Q11 8 19 8 Q27.8 8 27.8 15 V19 L30.1 25.9 Z" fill="#afb1b3"/><path d="M15 27.8 H22.9 Q22 32 19 32 Q16 32 15 27.8 Z" fill="#afb1b3"/><circle cx="26.9" cy="11" r="5.6" fill="#4e92c9" stroke="#3d3e40" stroke-width="1.6"/></svg>
<svg style="position:absolute;left:3014.4px;top:1783.6px" width="30" height="30" viewBox="3014.4 1783.6 30 30"><rect x="3017.3" y="1786.5" width="23.8" height="23.8" rx="1.6" fill="none" stroke="#000" stroke-width="1.8"/><rect x="3016.4" y="1785.6" width="25.6" height="5.9" rx="1.4" fill="#000"/><circle cx="3033.9" cy="1788.8" r="0.8" fill="#444"/><circle cx="3036.6" cy="1788.8" r="0.8" fill="#444"/><circle cx="3039.5" cy="1788.8" r="0.8" fill="#444"/><text x="3029.0" y="1805.0" font-family="Liberation Sans" font-weight="bold" font-size="10.5" fill="#000" text-anchor="middle" font-style="italic">/API</text></svg>
<div style="position:absolute;left:2px;top:2026px;width:3045px;height:1px;background:#2f3133;"></div>
<div style="position:absolute;left:2px;top:2027px;width:3045px;height:41px;background:#3d3e40;"></div>
<div style="position:absolute;left:2px;top:2068px;width:3045px;height:1px;background:#46484a;"></div>
<svg style="position:absolute;left:56px;top:2032px" width="30" height="32" viewBox="56 2032 30 32"><rect x="63.9" y="2040.6" width="3.9" height="17.3" fill="#afb1b3"/><circle cx="65.8" cy="2040.6" r="3.3" fill="#afb1b3"/><circle cx="65.8" cy="2057.9" r="3.3" fill="#afb1b3"/><circle cx="75.9" cy="2044.1" r="3.2" fill="#afb1b3"/><path d="M75.9 2044.5 V2047 Q75.9 2052.5 70.5 2052.8 L66 2053" fill="none" stroke="#afb1b3" stroke-width="3.6"/></svg>
<div style="position:absolute;left:92px;top:2034.91px;font:normal 23.3px 'Liberation Sans', sans-serif;line-height:normal;color:#bbbbbb;white-space:pre;letter-spacing:0px;-webkit-text-stroke:0.3px #bbbbbb;">Git</div>
<svg style="position:absolute;left:160px;top:2034px" width="24" height="30" viewBox="0 0 24 30"><path d="M3.7 6 L19.6 14.8 L3.7 23.6 Z" fill="#afb1b3"/></svg>
<div style="position:absolute;left:194px;top:2035.73px;font:normal 22.4px 'Liberation Sans', sans-serif;line-height:normal;color:#bbbbbb;white-space:pre;letter-spacing:0px;-webkit-text-stroke:0.3px #bbbbbb;">Run</div>
<svg style="position:absolute;left:270px;top:2034px" width="30" height="30" viewBox="0 0 30 30"><g fill="#afb1b3"><rect x="4" y="6" width="4" height="3.5"/><rect x="10" y="6" width="14" height="3.5"/><rect x="4" y="12.5" width="4" height="3.5"/><rect x="10" y="12.5" width="14" height="3.5"/><rect x="4" y="19" width="4" height="3.5"/><rect x="10" y="19" width="14" height="3.5"/></g></svg>
<div style="position:absolute;left:304px;top:2036.36px;font:normal 21.7px 'Liberation Sans', sans-serif;line-height:normal;color:#bbbbbb;white-space:pre;letter-spacing:0px;-webkit-text-stroke:0.3px #bbbbbb;">TODO</div>
<svg style="position:absolute;left:404px;top:2034px" width="30" height="30" viewBox="0 0 30 30"><circle cx="15" cy="14.5" r="10.5" fill="#afb1b3"/><rect x="13.2" y="8" width="3.6" height="8" fill="#3d3e40"/><rect x="13.2" y="18.5" width="3.6" height="3.5" fill="#3d3e40"/></svg>
<div style="position:absolute;left:440px;top:2035.28px;font:normal 22.9px 'Liberation Sans', sans-serif;line-height:normal;color:#bbbbbb;white-space:pre;letter-spacing:0px;-webkit-text-stroke:0.3px #bbbbbb;">Problems</div>
<svg style="position:absolute;left:576px;top:2034px" width="30" height="30" viewBox="0 0 30 30"><rect x="4" y="4" width="22" height="21" fill="#afb1b3"/><path d="M8 9 L13 13 L8 17" fill="none" stroke="#3d3e40" stroke-width="2"/><rect x="13" y="18.5" width="8" height="2" fill="#3d3e40"/></svg>
<div style="position:absolute;left:613px;top:2035.64px;font:normal 22.5px 'Liberation Sans', sans-serif;line-height:normal;color:#bbbbbb;white-space:pre;letter-spacing:0px;-webkit-text-stroke:0.3px #bbbbbb;">Terminal</div>
<svg style="position:absolute;left:2794.2px;top:2034.1px" width="30" height="30" viewBox="2794.2 2034.1 30 30"><rect x="2797.1" y="2037.0" width="23.8" height="23.8" rx="1.6" fill="none" stroke="#000" stroke-width="1.8"/><rect x="2796.2" y="2036.1" width="25.6" height="5.9" rx="1.4" fill="#000"/><circle cx="2813.7" cy="2039.3" r="0.8" fill="#444"/><circle cx="2816.3999999999996" cy="2039.3" r="0.8" fill="#444"/><circle cx="2819.2999999999997" cy="2039.3" r="0.8" fill="#444"/><text x="2808.7999999999997" y="2055.5" font-family="Liberation Sans" font-weight="bold" font-size="10.5" fill="#000" text-anchor="middle" font-style="italic">/API</text></svg>
<div style="position:absolute;left:2831px;top:2035.55px;font:normal 22.6px 'Liberation Sans', sans-serif;line-height:normal;color:#bbbbbb;white-space:pre;letter-spacing:0px;-webkit-text-stroke:0.3px #bbbbbb;">Audit Problems</div>
<svg style="position:absolute;left:8px;top:2074px" width="32" height="32" viewBox="0 0 32 32"><path d="M9.1 5 H27 V22.8 H9.1 Z M4.9 8 V27 H24" fill="none" stroke="#c4c5c7" stroke-width="2.2"/></svg>
<div style="position:absolute;left:62px;top:2077.46px;font:normal 22.7px 'Liberation Sans', sans-serif;line-height:normal;color:#bbbbbb;white-space:pre;letter-spacing:0px;-webkit-text-stroke:0.3px #bbbbbb;">Externally added files can be added to Git // View Files // Always Add // Don't Ask Again (today 8:23 PM)</div>
<svg style="position:absolute;left:2508px;top:2072px" width="40" height="38" viewBox="2508 2072 40 38"><path d="M2518 2096 Q2511.7 2096 2511.7 2089 Q2511.7 2082 2518.5 2081.5 Q2521 2075.9 2527.5 2075.9 Q2534 2075.9 2536 2082.5 Q2541.9 2083.5 2541.9 2089.5 Q2541.9 2091 2541 2092 L2532 2096 Z" fill="#afb1b3"/><text x="2527" y="2091.5" font-family="Liberation Sans" font-weight="bold" font-size="16" fill="#3d3e40" text-anchor="middle">?</text><circle cx="2536.8" cy="2098.5" r="9.2" fill="#3d3e40"/><path d="M2534.96 2091.13 L2538.64 2091.13 L2538.82 2093.49 L2540.12 2094.24 L2542.27 2093.22 L2544.11 2096.41 L2542.15 2097.75 L2542.15 2099.25 L2544.11 2100.59 L2542.27 2103.78 L2540.12 2102.76 L2538.82 2103.51 L2538.64 2105.87 L2534.96 2105.87 L2534.78 2103.51 L2533.48 2102.76 L2531.33 2103.78 L2529.49 2100.59 L2531.45 2099.25 L2531.45 2097.75 L2529.49 2096.41 L2531.33 2093.22 L2533.48 2094.24 L2534.78 2093.49 Z M2536.8 2096.1 A2.4 2.4 0 1 0 2536.8100000000004 2096.1 Z" fill="#afb1b3" fill-rule="evenodd"/></svg>
<div style="position:absolute;left:2564px;top:2077.46px;font:normal 22.7px 'Liberation Sans', sans-serif;line-height:normal;color:#bbbbbb;white-space:pre;letter-spacing:0px;-webkit-text-stroke:0.3px #bbbbbb;">22:1</div>
<div style="position:absolute;left:2631px;top:2077.18px;font:normal 23px 'Liberation Sans', sans-serif;line-height:normal;color:#bbbbbb;white-space:pre;letter-spacing:0px;-webkit-text-stroke:0.3px #bbbbbb;">LF</div>
<div style="position:absolute;left:2678px;top:2076.46px;font:normal 23.8px 'Liberation Sans', sans-serif;line-height:normal;color:#bbbbbb;white-space:pre;letter-spacing:0px;-webkit-text-stroke:0.3px #bbbbbb;">UTF-8</div>
<div style="position:absolute;left:2768px;top:2077.18px;font:normal 23px 'Liberation Sans', sans-serif;line-height:normal;color:#bbbbbb;white-space:pre;letter-spacing:0px;-webkit-text-stroke:0.3px #bbbbbb;">Tab</div>
<svg style="position:absolute;left:2826px;top:2072px" width="28" height="36" viewBox="2826 2072 28 36"><rect x="2834" y="2079.5" width="4" height="21.2" fill="#afb1b3"/><circle cx="2836" cy="2079.5" r="3.6" fill="#afb1b3"/><circle cx="2836" cy="2100.7" r="3.6" fill="#afb1b3"/><circle cx="2847.7" cy="2081.8" r="3.4" fill="#afb1b3"/><path d="M2847.7 2082 V2085 Q2847.7 2091 2841 2093 L2836 2095" fill="none" stroke="#afb1b3" stroke-width="3.8"/></svg>
<div style="position:absolute;left:2862px;top:2077.09px;font:normal 23.1px 'Liberation Sans', sans-serif;line-height:normal;color:#bbbbbb;white-space:pre;letter-spacing:0px;-webkit-text-stroke:0.3px #bbbbbb;">master</div>
<svg style="position:absolute;left:2948px;top:2072px" width="32" height="34" viewBox="2948 2072 32 34"><path d="M2953.4 2088 V2081.5 A4.45 4.45 0 0 1 2962.3 2081.5 V2088.5" fill="none" stroke="#afb1b3" stroke-width="3"/><rect x="2957.9" y="2088.1" width="16.2" height="11.9" fill="#afb1b3"/></svg>
<svg style="position:absolute;left:3000px;top:2076px" width="30" height="30" viewBox="0 0 30 30"><circle cx="14" cy="14.4" r="12.2" fill="#c05c55"/><rect x="12" y="6.5" width="4" height="8.5" fill="#3d3e40"/><rect x="12" y="18.5" width="4" height="3.8" fill="#3d3e40"/></svg>
<svg style="position:absolute;left:0;top:0" width="26" height="26"><path d="M0 0 H23 A23 23 0 0 0 0 23 Z" fill="#3d3e40"/><path d="M0 19.5 A22.5 22.5 0 0 1 19.5 0" fill="none" stroke="#000" stroke-width="1.6"/><path d="M2 22 A20 20 0 0 1 22 2" fill="none" stroke="#8a8a8a" stroke-width="2"/></svg>
<svg style="position:absolute;left:3024px;top:0" width="26" height="26"><path d="M26 0 H3 A23 23 0 0 1 26 23 Z" fill="#3d3e40"/><path d="M26 19.5 A22.5 22.5 0 0 0 6.5 0" fill="none" stroke="#000" stroke-width="1.6"/><path d="M24 22 A20 20 0 0 0 4 2" fill="none" stroke="#8a8a8a" stroke-width="2"/></svg>
<svg style="position:absolute;left:0;top:2084px" width="26" height="26"><path d="M0 26 H23 A23 23 0 0 1 0 3 Z" fill="#000"/><path d="M2 4 A20 20 0 0 0 22 24" fill="none" stroke="#707173" stroke-width="2"/></svg>
<svg style="position:absolute;left:3024px;top:2084px" width="26" height="26"><path d="M26 26 H3 A23 23 0 0 0 26 3 Z" fill="#000"/><path d="M24 4 A20 20 0 0 1 4 24" fill="none" stroke="#707173" stroke-width="2"/></svg>
</body></html>
